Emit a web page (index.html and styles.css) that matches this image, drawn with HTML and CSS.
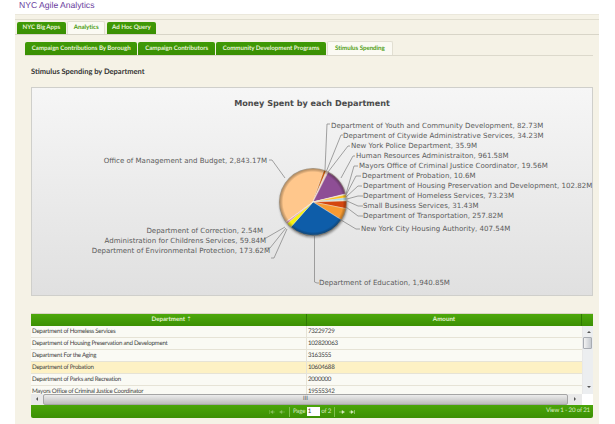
FILE: index.html
```html
<!DOCTYPE html>
<html lang="en">
<head>
<meta charset="utf-8">
<title>NYC Agile Analytics</title>
<link rel="stylesheet" href="styles.css">
</head>
<body>
<header class="brand">NYC Agile Analytics</header>
<main class="shell">
  <nav class="tabs tabs-main">
    <span class="tab">NYC Big Apps</span>
    <span class="tab active">Analytics</span>
    <span class="tab">Ad Hoc Query</span>
  </nav>
  <section class="content">
    <nav class="tabs tabs-sub">
      <span class="tab">Campaign Contributions By Borough</span>
      <span class="tab">Campaign Contributors</span>
      <span class="tab">Community Development Programs</span>
      <span class="tab active">Stimulus Spending</span>
    </nav>
    <h2 class="section-title">Stimulus Spending by Department</h2>
    <figure class="chart">
      <svg class="chart-svg" width="562" height="209" viewBox="31 87 562 209">
        <defs>
          <radialGradient id="rim" gradientUnits="userSpaceOnUse" cx="0" cy="0" r="34">
            <stop offset="0.88" stop-color="#000" stop-opacity="0"/>
            <stop offset="1" stop-color="#3a2a10" stop-opacity="0.45"/>
          </radialGradient>
          <filter id="soft" x="-20%" y="-20%" width="140%" height="140%"><feGaussianBlur stdDeviation="1.2"/></filter>
        </defs>
        <text class="chart-title" x="312" y="106" text-anchor="middle">Money Spent by each Department</text>
        <g class="leaders">
          <path d="M325 170 L327 124 H330"/>
          <path d="M326.500 171 L341 135 H343"/>
          <path d="M328 172 L348 146 H350"/>
          <path d="M341 178 L353 156 H355"/>
          <path d="M346 194 L354 166 H358"/>
          <path d="M346 195 L356 176 H361"/>
          <path d="M346 197 L358 186 H362"/>
          <path d="M347 199 L358 196 H363"/>
          <path d="M347 201 L358 206 H363"/>
          <path d="M346 207 L358 216 H363"/>
          <path d="M341 220 L356 229 H360"/>
          <path d="M314.500 236 V282 L317 283 H319"/>
          <path d="M285 227 L266 238 H264"/>
          <path d="M286 228 L270 248 H266"/>
          <path d="M287 229 L274 258 H271"/>
          <path d="M285 178 L272 160 H269"/>
        </g>
        <g class="labels">
          <text x="331" y="128">Department of Youth and Community Development, 82.73M</text>
          <text x="343" y="138">Department of Citywide Administrative Services, 34.23M</text>
          <text x="351" y="148">New York Police Department, 35.9M</text>
          <text x="356" y="158">Human Resources Administraiton, 961.58M</text>
          <text x="359" y="168">Mayors Office of Criminal Justice Coordinator, 19.56M</text>
          <text x="362" y="178">Department of Probation, 10.6M</text>
          <text x="363" y="188">Department of Housing Preservation and Development, 102.82M</text>
          <text x="363" y="198">Department of Homeless Services, 73.23M</text>
          <text x="363" y="208">Small Business Services, 31.43M</text>
          <text x="363" y="218">Department of Transportation, 257.82M</text>
          <text x="361" y="231">New York City Housing Authority, 407.54M</text>
          <text x="319" y="285">Department of Education, 1,940.85M</text>
          <text x="267" y="163" text-anchor="end">Office of Management and Budget, 2,843.17M</text>
          <text x="263" y="233" text-anchor="end">Department of Correction, 2.54M</text>
          <text x="266" y="243" text-anchor="end">Administration for Childrens Services, 59.84M</text>
          <text x="270" y="253" text-anchor="end">Department of Environmental Protection, 173.62M</text>
        </g>
        <g transform="translate(313 202)">
          <circle class="pie-shadow" cx="0.500" cy="1.500" r="34" filter="url(#soft)"/>
          <g class="slices">
            <path fill="#ffc78c" d="M0 0L-26.95 19.89A33.500 33.500 0 0 1 10.91 -31.67Z"/>
            <path fill="#c45a08" d="M0 0L10.91 -31.67A33.500 33.500 0 0 1 13.21 -30.78Z"/>
            <path fill="#f2b8c8" d="M0 0L13.21 -30.78A33.500 33.500 0 0 1 14.15 -30.37Z"/>
            <path fill="#f0d8a0" d="M0 0L14.15 -30.37A33.500 33.500 0 0 1 15.11 -29.90Z"/>
            <path fill="#8e4e95" d="M0 0L15.11 -29.90A33.500 33.500 0 0 1 32.51 -8.09Z"/>
            <path fill="#f7d9c0" d="M0 0L32.51 -8.09A33.500 33.500 0 0 1 32.64 -7.52Z"/>
            <path fill="#f5e6b0" d="M0 0L32.64 -7.52A33.500 33.500 0 0 1 32.71 -7.22Z"/>
            <path fill="#fcc21a" d="M0 0L32.71 -7.22A33.500 33.500 0 0 1 33.24 -4.19Z"/>
            <path fill="#a4dbe8" d="M0 0L33.24 -4.19A33.500 33.500 0 0 1 33.44 -2Z"/>
            <path fill="#d9e8c0" d="M0 0L33.44 -2A33.500 33.500 0 0 1 33.48 -1.07Z"/>
            <path fill="#d4460e" d="M0 0L33.48 -1.07A33.500 33.500 0 0 1 32.84 6.60Z"/>
            <path fill="#f79a32" d="M0 0L32.84 6.60A33.500 33.500 0 0 1 28.34 17.86Z"/>
            <path fill="#0e5da9" d="M0 0L28.34 17.86A33.500 33.500 0 0 1 -22.20 25.09Z"/>
            <path fill="#f6f214" d="M0 0L-22.20 25.09A33.500 33.500 0 0 1 -25.81 21.35Z"/>
            <path fill="#e88bb0" d="M0 0L-25.81 21.35A33.500 33.500 0 0 1 -26.91 19.96Z"/>
            <path fill="#c0d040" d="M0 0L-26.91 19.96A33.500 33.500 0 0 1 -26.95 19.89Z"/>
          </g>
          <circle cx="0" cy="0" r="34" fill="url(#rim)"/>
        </g>
      </svg>
    </figure>
    <div class="grid">
      <div class="grid-head">
        <div class="col-dept">Department <span class="sort">&#8673;</span></div>
        <div class="col-amount">Amount</div>
        <div class="col-gutter"></div>
      </div>
      <div class="grid-main">
        <div class="grid-rows">
          <div class="row"><span class="col-dept">Department of Homeless Services</span><span class="col-amount">73229729</span></div>
          <div class="row"><span class="col-dept">Department of Housing Preservation and Development</span><span class="col-amount">102820063</span></div>
          <div class="row"><span class="col-dept">Department For the Aging</span><span class="col-amount">3163555</span></div>
          <div class="row selected"><span class="col-dept">Department of Probation</span><span class="col-amount">10604688</span></div>
          <div class="row"><span class="col-dept">Department of Parks and Recreation</span><span class="col-amount">2000000</span></div>
          <div class="row"><span class="col-dept">Mayors Office of Criminal Justice Coordinator</span><span class="col-amount">19555342</span></div>
        </div>
        <div class="vscroll">
          <span class="arrow up"></span>
          <span class="vthumb"></span>
          <span class="arrow down"></span>
        </div>
      </div>
      <div class="hscroll">
        <span class="arrow left"></span>
        <span class="hthumb"><span class="grip">III</span></span>
        <span class="arrow right"></span>
        <span class="corner"></span>
      </div>
      <div class="pager">
        <div class="pager-mid">
          <svg class="pg-icon dim" width="6" height="4" viewBox="0 0 6 4"><path d="M0.500 0V4M4 0.500L1.500 2L4 3.500ZM4 2H6"/></svg>
          <svg class="pg-icon dim" width="6" height="4" viewBox="0 0 6 4"><path d="M3 0.500L0.500 2L3 3.500ZM3 2H6"/></svg>
          <span class="pg-sep"></span>
          <span>Page</span>
          <span class="pg-input">1</span>
          <span>of 2</span>
          <span class="pg-sep"></span>
          <svg class="pg-icon" width="6" height="4" viewBox="0 0 6 4"><path d="M0 2H3M3 0.500L5.500 2L3 3.500Z"/></svg>
          <svg class="pg-icon" width="6" height="4" viewBox="0 0 6 4"><path d="M0 2H2M2 0.500L4.500 2L2 3.500ZM5.500 0V4"/></svg>
        </div>
        <div class="pager-view">View 1 - 20 of 21</div>
      </div>
    </div>
  </section>
</main>
</body>
</html>
```
FILE: styles.css
```css
html, body {
  margin: 0;
  padding: 0;
  background: #fff;
  overflow: hidden;
}
body {
  width: 615px;
  height: 424px;
  font-family: Lato, sans-serif;
  font-variant-numeric: lining-nums;
  text-rendering: geometricPrecision;
}
.brand {
  height: 14px;
  padding: 0 0 0 19px;
  font: 8.600px/11px "Liberation Sans", sans-serif;
  color: #6a3d9e;
}
.shell {
  margin-left: 15px;
  width: 584px;
  height: 410px;
  background: #f5f2e6;
  border-top: 1px solid #ebe8dc;
  padding-top: 4px;
  box-sizing: border-box;
}
.tabs {
  display: flex;
  align-items: flex-end;
  gap: 1px;
}
.tabs-main {
  height: 16px;
  padding-left: 2px;
  gap: 1.500px;
  border-top: 1px solid #e0ddcf;
  border-bottom: 1px solid #d8d5c8;
  box-sizing: border-box;
}
.tab {
  display: block;
  height: 12px;
  padding: 0 5.500px;
  font-size: 6.200px;
  font-weight: 700;
  line-height: 12px;
  letter-spacing: -0.050px;
  color: #e8f3d8;
  background: linear-gradient(#3f9a06, #3a8f03);
  border-radius: 2px 2px 0 0;
  white-space: nowrap;
}
.tab.active {
  color: #4d9e14;
  background: #fbfaf3;
  height: 13px;
  border: 1px solid #e2dfd2;
  border-bottom: 0;
  box-sizing: border-box;
}
.content {
  padding: 7px 6px 0 16px;
}
.tabs-sub {
  height: 14px;
  margin-left: -6px;
  border-bottom: 1px solid #dcd9cc;
  box-sizing: border-box;
}
.tabs-sub .tab {
  height: 13px;
  padding: 0 6.800px;
  line-height: 13px;
}
.tabs-sub .tab.active {
  height: 14px;
}
.section-title {
  margin: 10px 0 10px;
  font-size: 7.500px;
  font-weight: 700;
  line-height: 11px;
  color: #333;
}
.chart {
  margin: 0;
  width: 562px;
  height: 209px;
  box-sizing: border-box;
  border: 1px solid #cfcfcb;
  background: linear-gradient(#f6f6f6, #e0e0e0);
  position: relative;
}
.chart-svg {
  display: block;
  position: absolute;
  left: -1px;
  top: -1px;
}
.chart-title {
  font: 700 8.100px "DejaVu Sans", sans-serif;
  fill: #4b4b4b;
}
.labels text {
  font: 7.050px "DejaVu Sans", sans-serif;
  fill: #5c5c5c;
}
.leaders path {
  fill: none;
  stroke: #8a8a8a;
  stroke-width: 0.8;
}
.pie-shadow {
  fill: #555;
  opacity: 0.6;
}
.slices path {
  stroke: #f7efe6;
  stroke-width: 0.4;
}
.grid {
  margin-top: 17px;
  width: 562px;
  border-radius: 2px;
  font-size: 6.200px;
  color: #444;
}
.grid-head {
  display: flex;
  height: 13px;
  background: linear-gradient(#4da80b, #3c9004);
  border-top: 1px solid #d9d6c6;
  box-sizing: border-box;
  color: #e6f3d4;
  font-weight: 700;
  line-height: 12px;
  text-align: center;
}
.grid-head .col-dept {
  width: 276px;
  padding-left: 6px;
  border-right: 1px solid #2f7a02;
  box-sizing: border-box;
}
.grid-head .col-amount {
  width: 275px;
  border-right: 1px solid #2f7a02;
  box-sizing: border-box;
}
.sort {
  font-size: 6px;
  font-weight: 400;
}
.grid-main {
  display: flex;
  height: 68px;
  overflow: hidden;
  background: #fff;
}
.grid-rows {
  width: 551px;
  flex: none;
}
.row {
  display: flex;
  height: 12px;
  line-height: 11px;
  letter-spacing: -0.280px;
  background: #fafaf4;
  border-bottom: 1px solid #e6e3d6;
  box-sizing: border-box;
  white-space: nowrap;
}
.row.selected {
  background: #fdf1c4;
}
.row .col-dept {
  width: 276px;
  padding-left: 1px;
  box-sizing: border-box;
  border-right: 1px solid #e6e3d6;
}
.row .col-amount {
  padding-left: 1px;
}
.vscroll {
  flex: 1;
  background: #eceef0;
  position: relative;
  border-left: 1px solid #e8e8e8;
}
.vthumb {
  position: absolute;
  left: 0;
  right: 1px;
  top: 11px;
  height: 12px;
  background: linear-gradient(90deg, #f2f2f2, #c6cad0);
  border: 1px solid #a8acb2;
  box-sizing: border-box;
  border-radius: 1px;
}
.arrow {
  position: absolute;
  width: 0;
  height: 0;
  border: 2px solid transparent;
}
.arrow.up { top: 3px; left: 4px; border-bottom-color: #555; }
.arrow.down { bottom: 4px; left: 4px; border-top-color: #555; }
.arrow.left { left: 3px; top: 3px; border-right-color: #555; }
.arrow.right { right: 15px; top: 3px; border-left-color: #555; }
.hscroll {
  height: 11px;
  position: relative;
  display: flex;
  background: #e9e9e9;
}
.hthumb {
  position: absolute;
  left: 12px;
  right: 25px;
  top: 0;
  bottom: 0;
  background: linear-gradient(#ececec, #bcbcbc);
  border: 1px solid #a5a5a5;
  border-radius: 2px;
  box-sizing: border-box;
  text-align: center;
}
.grip {
  font-size: 6px;
  line-height: 8px;
  color: #555;
}
.corner {
  position: absolute;
  right: 0;
  top: 0;
  bottom: 0;
  width: 11px;
  background: #fff;
}
.pager {
  height: 13px;
  margin-top: 0;
  position: relative;
  display: flex;
  justify-content: center;
  align-items: center;
  background: linear-gradient(#4aa509, #3c9004);
  border-radius: 0 0 2px 2px;
  color: #d9ecc2;
  line-height: 12px;
  letter-spacing: -0.200px;
}
.pager-mid {
  display: flex;
  align-items: center;
  gap: 1.500px;
}
.pg-icon {
  margin: 0 1.500px;
  fill: #d9ecc2;
  stroke: #d9ecc2;
  stroke-width: 0.5;
}
.pg-icon.dim {
  opacity: 0.45;
}
.pg-sep {
  width: 1px;
  height: 10px;
  margin: 0 1px;
  background: #7fc04d;
}
.pg-input {
  width: 13px;
  height: 9px;
  background: #fff;
  color: #333;
  line-height: 9px;
  padding-left: 1px;
  box-sizing: border-box;
}
.pager-view {
  position: absolute;
  right: 3px;
  top: 0;
}
```
